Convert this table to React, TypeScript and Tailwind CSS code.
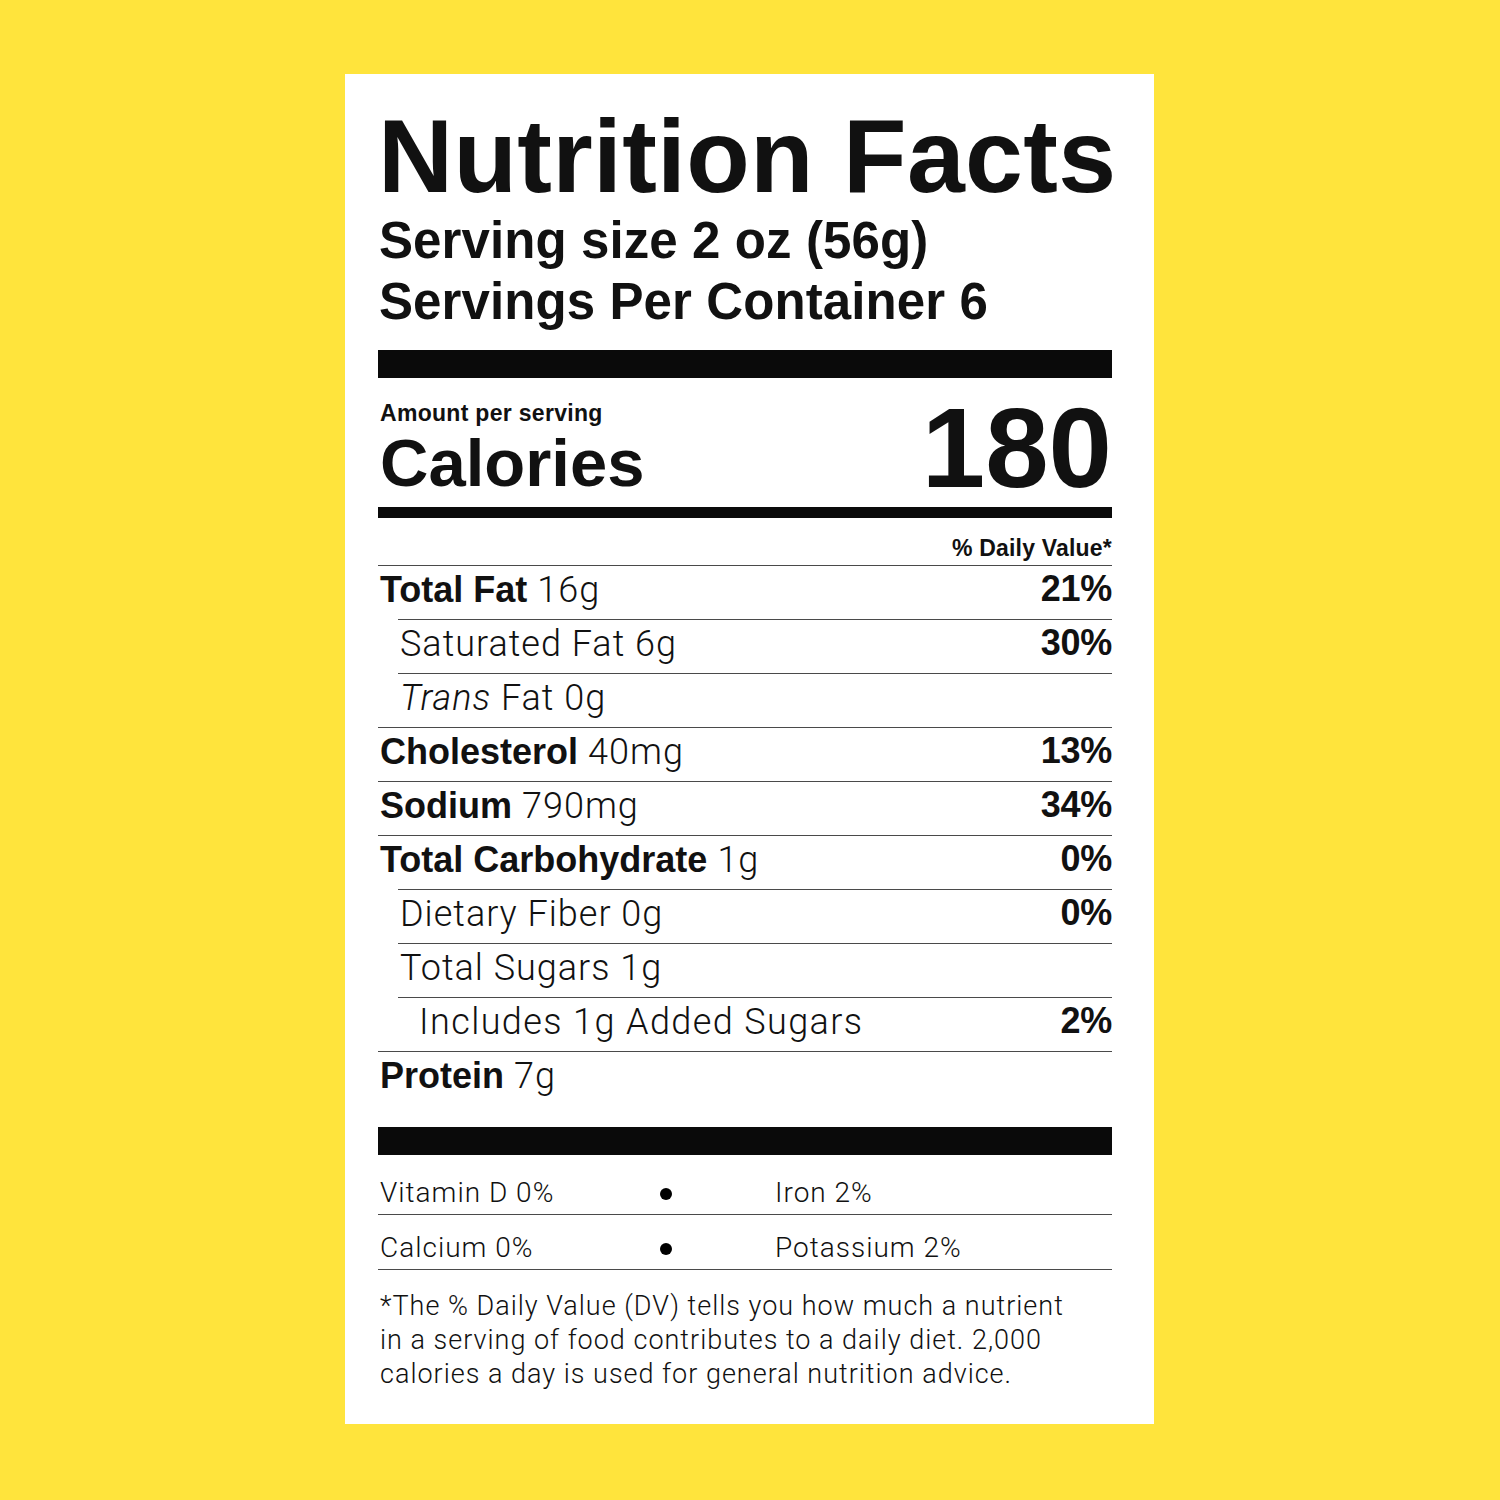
const bold = "font-['Liberation_Sans',Arial,sans-serif] font-bold";
const light = "font-['Roboto','Liberation_Sans',sans-serif] font-light";

type Row = {
  name?: string;
  amount: string;
  dv?: string;
  level: 0 | 1 | 2;
  trans?: boolean;
};

const rows: Row[] = [
  { name: "Total Fat", amount: "16g", dv: "21%", level: 0 },
  { amount: "Saturated Fat 6g", dv: "30%", level: 1 },
  { amount: "Fat 0g", level: 1, trans: true },
  { name: "Cholesterol", amount: "40mg", dv: "13%", level: 0 },
  { name: "Sodium", amount: "790mg", dv: "34%", level: 0 },
  { name: "Total Carbohydrate", amount: "1g", dv: "0%", level: 0 },
  { amount: "Dietary Fiber 0g", dv: "0%", level: 1 },
  { amount: "Total Sugars 1g", level: 1 },
  { amount: "Includes 1g Added Sugars", dv: "2%", level: 2 },
  { name: "Protein", amount: "7g", level: 0 },
];

function NutrientRow({ row }: { row: Row }) {
  return (
    <div
      className={`flex justify-between items-start h-[54px] pt-[3px] border-t border-[#4a4a4a] ${
        row.level > 0 ? "ml-[20px]" : ""
      }`}
    >
      <div
        className={`text-[36px] leading-[40px] whitespace-nowrap ${
          row.level === 2 ? "pl-[21px]" : "pl-[2px]"
        }`}
      >
        {row.name && <span className={bold}>{row.name} </span>}
        {row.trans && <span className={`${light} italic tracking-[1px]`}>Trans </span>}
        <span className={`${light} ${row.level === 2 ? "tracking-[1.4px]" : "tracking-[1px]"}`}>
          {row.amount}
        </span>
      </div>
      {row.dv && (
        <div className={`${bold} text-[36px] leading-[40px] tracking-[-0.3px]`}>{row.dv}</div>
      )}
    </div>
  );
}

export default function App() {
  return (
    <div className="w-[1500px] h-[1500px] bg-[#FFE43C] pt-[74px] pl-[345px] text-[#111]">
      <div className="w-[809px] h-[1350px] bg-white pt-[30px] pl-[33px] pr-[42px]">
        <h1 className={`${bold} text-[104px] leading-[104px] tracking-[0.3px] whitespace-nowrap`}>
          Nutrition Facts
        </h1>
        <div className={`${bold} text-[51px] leading-[61px] mt-[2px] pl-[1px] tracking-[0.1px] whitespace-nowrap`}>
          <div>Serving size 2 oz (56g)</div>
          <div>Servings Per Container 6</div>
        </div>

        <div className="h-[28px] bg-[#0a0a0a] mt-[18px]" />

        <div className="flex justify-between items-end mt-[21px]">
          <div className="pl-[2px]">
            <div className={`${bold} text-[23px] leading-[28px] tracking-[0.3px]`}>Amount per serving</div>
            <div className={`${bold} text-[67px] leading-[66px] mt-[3px]`}>Calories</div>
          </div>
          <div className={`${bold} text-[114px] leading-[97px]`}>180</div>
        </div>

        <div className="h-[11px] bg-[#0a0a0a] mt-[11px]" />

        <div className={`${bold} text-[23px] leading-[28px] text-right mt-[16px] pb-[3px] tracking-[0.2px]`}>
          % Daily Value*
        </div>

        {rows.map((r, i) => (
          <NutrientRow key={i} row={r} />
        ))}

        <div className="h-[28px] bg-[#0a0a0a] mt-[22px]" />

        <div className={`${light} text-[28px] leading-[32px] tracking-[1px]`}>
          <div className="flex items-end h-[60px] pb-[5px] border-b border-[#4a4a4a]">
            <div className="w-[282px] pl-[2px]">Vitamin D 0%</div>
            <div className="w-[12px] h-[12px] rounded-full bg-black mb-[9px]" />
            <div className="ml-[103px]">Iron 2%</div>
          </div>
          <div className="flex items-end h-[55px] pb-[5px] border-b border-[#4a4a4a]">
            <div className="w-[282px] pl-[2px]">Calcium 0%</div>
            <div className="w-[12px] h-[12px] rounded-full bg-black mb-[9px]" />
            <div className="ml-[103px]">Potassium 2%</div>
          </div>
        </div>

        <p className={`${light} text-[27px] leading-[34px] mt-[19px] pl-[2px] tracking-[1px] whitespace-nowrap`}>
          *The % Daily Value (DV) tells you how much a nutrient
          <br />
          in a serving of food contributes to a daily diet. 2,000
          <br />
          calories a day is used for general nutrition advice.
        </p>
      </div>
    </div>
  );
}
